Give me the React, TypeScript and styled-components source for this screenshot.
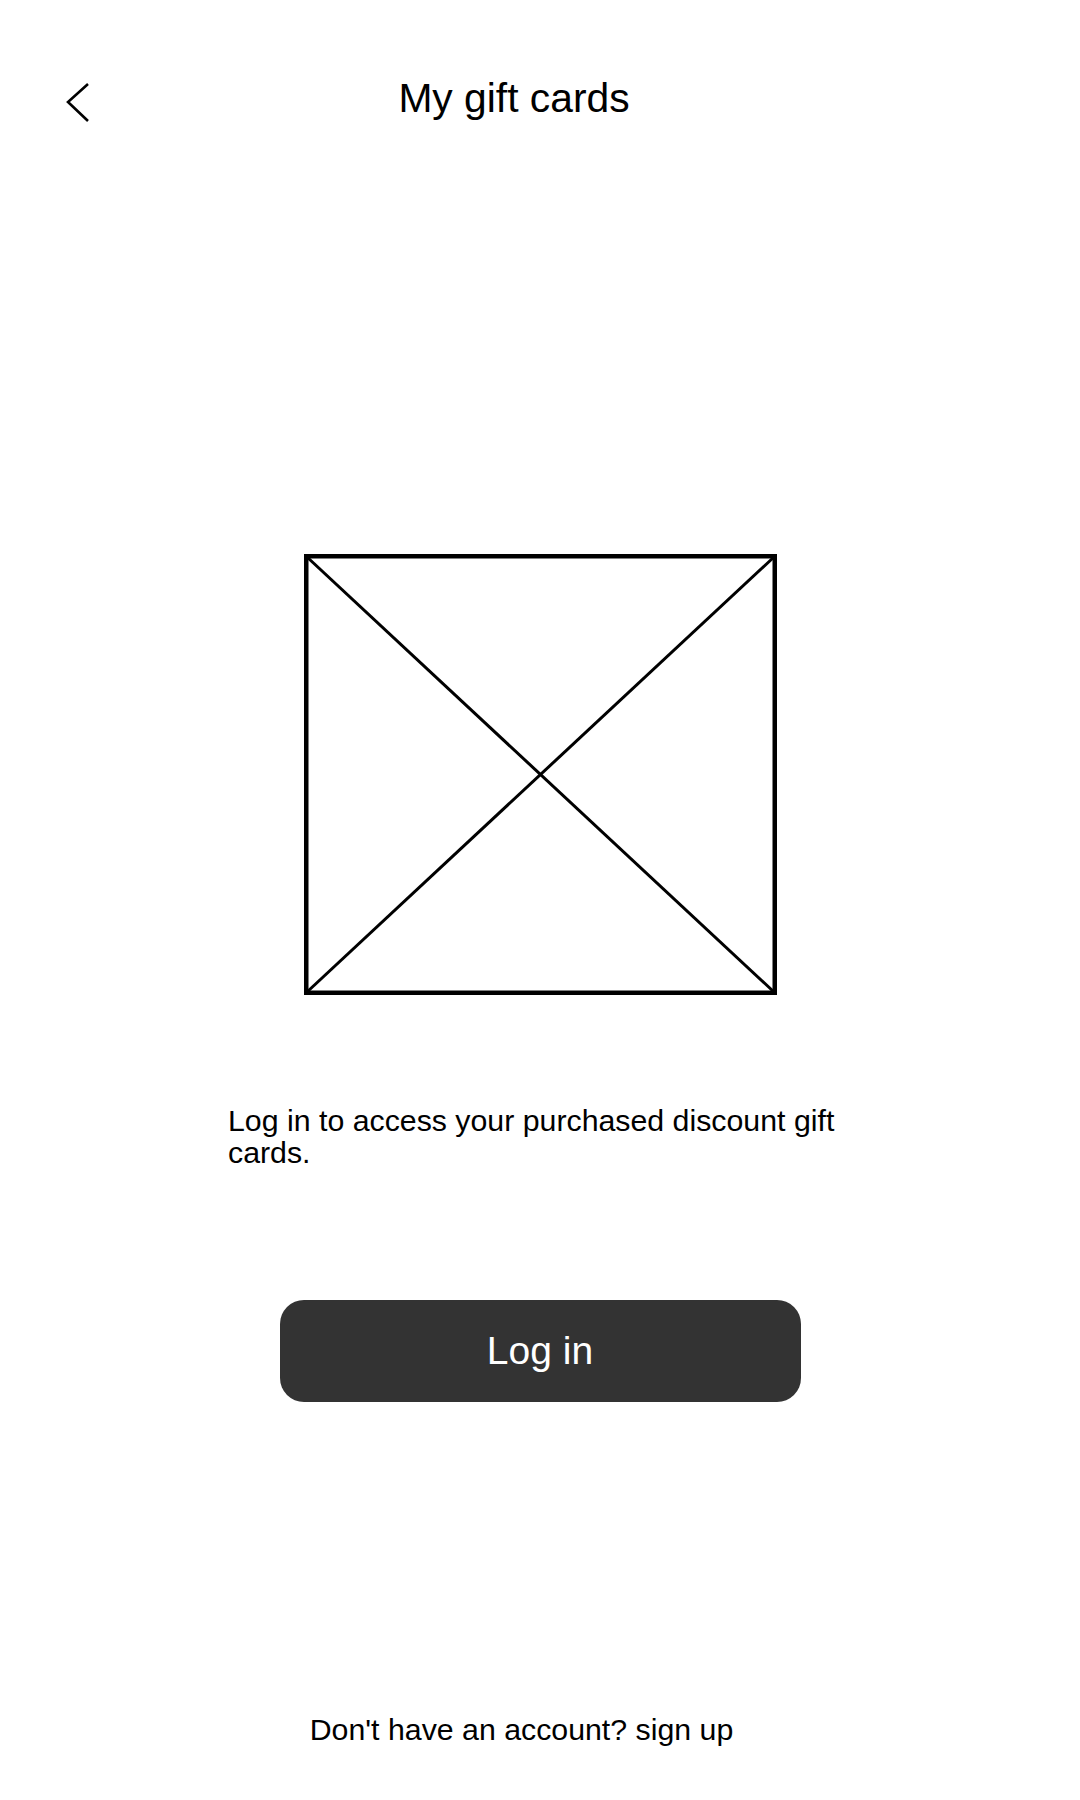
import React from "react";
import styled, { createGlobalStyle } from "styled-components";

const GlobalStyle = createGlobalStyle`
  html, body {
    margin: 0;
    padding: 0;
    background: #ffffff;
  }
  body {
    font-family: "Liberation Sans", Arial, sans-serif;
    color: #000000;
  }
  * { box-sizing: border-box; }
`;

const Page = styled.div`
  width: 1080px;
  min-height: 1800px;
  display: flex;
  flex-direction: column;
  align-items: center;
  background: #ffffff;
`;

const Header = styled.header`
  width: 100%;
  display: flex;
  align-items: flex-start;
  padding: 74px 142px 0 66px;
`;

const BackButton = styled.button`
  width: 24px;
  height: 40px;
  margin-top: 8px;
  padding: 0;
  border: none;
  background: transparent;
  display: flex;
  align-items: center;
  justify-content: center;
  cursor: pointer;
`;

const Title = styled.h1`
  flex: 1;
  margin: 0;
  text-align: center;
  font-size: 40.8px;
  line-height: 48px;
  font-weight: 400;
  color: #000000;
`;

const Placeholder = styled.div`
  margin-top: 432px;
  width: 473px;
  height: 441px;
  display: flex;
`;

const Message = styled.p`
  margin: 110px 0 0;
  width: 624px;
  font-size: 30.3px;
  line-height: 32px;
  color: #000000;
`;

const PrimaryButton = styled.button`
  margin-top: 131px;
  width: 521px;
  height: 102px;
  border: none;
  border-radius: 24px;
  background: #333333;
  color: #ffffff;
  font-family: "Liberation Sans", Arial, sans-serif;
  font-size: 39px;
  display: flex;
  align-items: center;
  justify-content: center;
  cursor: pointer;
`;

const Footer = styled.p`
  margin: 312px 0 0;
  padding-right: 37px;
  font-size: 30.3px;
  line-height: 32px;
  color: #000000;
`;

export default function App() {
  return (
    <>
      <GlobalStyle />
      <Page>
        <Header>
          <BackButton aria-label="Back">
            <svg width="24" height="40" viewBox="0 0 24 40" fill="none">
              <polyline
                points="22,2 2,20 22,39"
                stroke="#000"
                strokeWidth="2.6"
                strokeLinecap="butt"
                strokeLinejoin="miter"
              />
            </svg>
          </BackButton>
          <Title>My gift cards</Title>
        </Header>
        <Placeholder>
          <svg width="473" height="441" viewBox="0 0 473 441" fill="none">
            <rect x="2.25" y="2.25" width="468.5" height="436.5" stroke="#000" strokeWidth="4.5" />
            <line x1="3" y1="3" x2="470" y2="438" stroke="#000" strokeWidth="3" />
            <line x1="470" y1="3" x2="3" y2="438" stroke="#000" strokeWidth="3" />
          </svg>
        </Placeholder>
        <Message>Log in to access your purchased discount gift cards.</Message>
        <PrimaryButton>Log in</PrimaryButton>
        <Footer>Don't have an account? sign up</Footer>
      </Page>
    </>
  );
}
